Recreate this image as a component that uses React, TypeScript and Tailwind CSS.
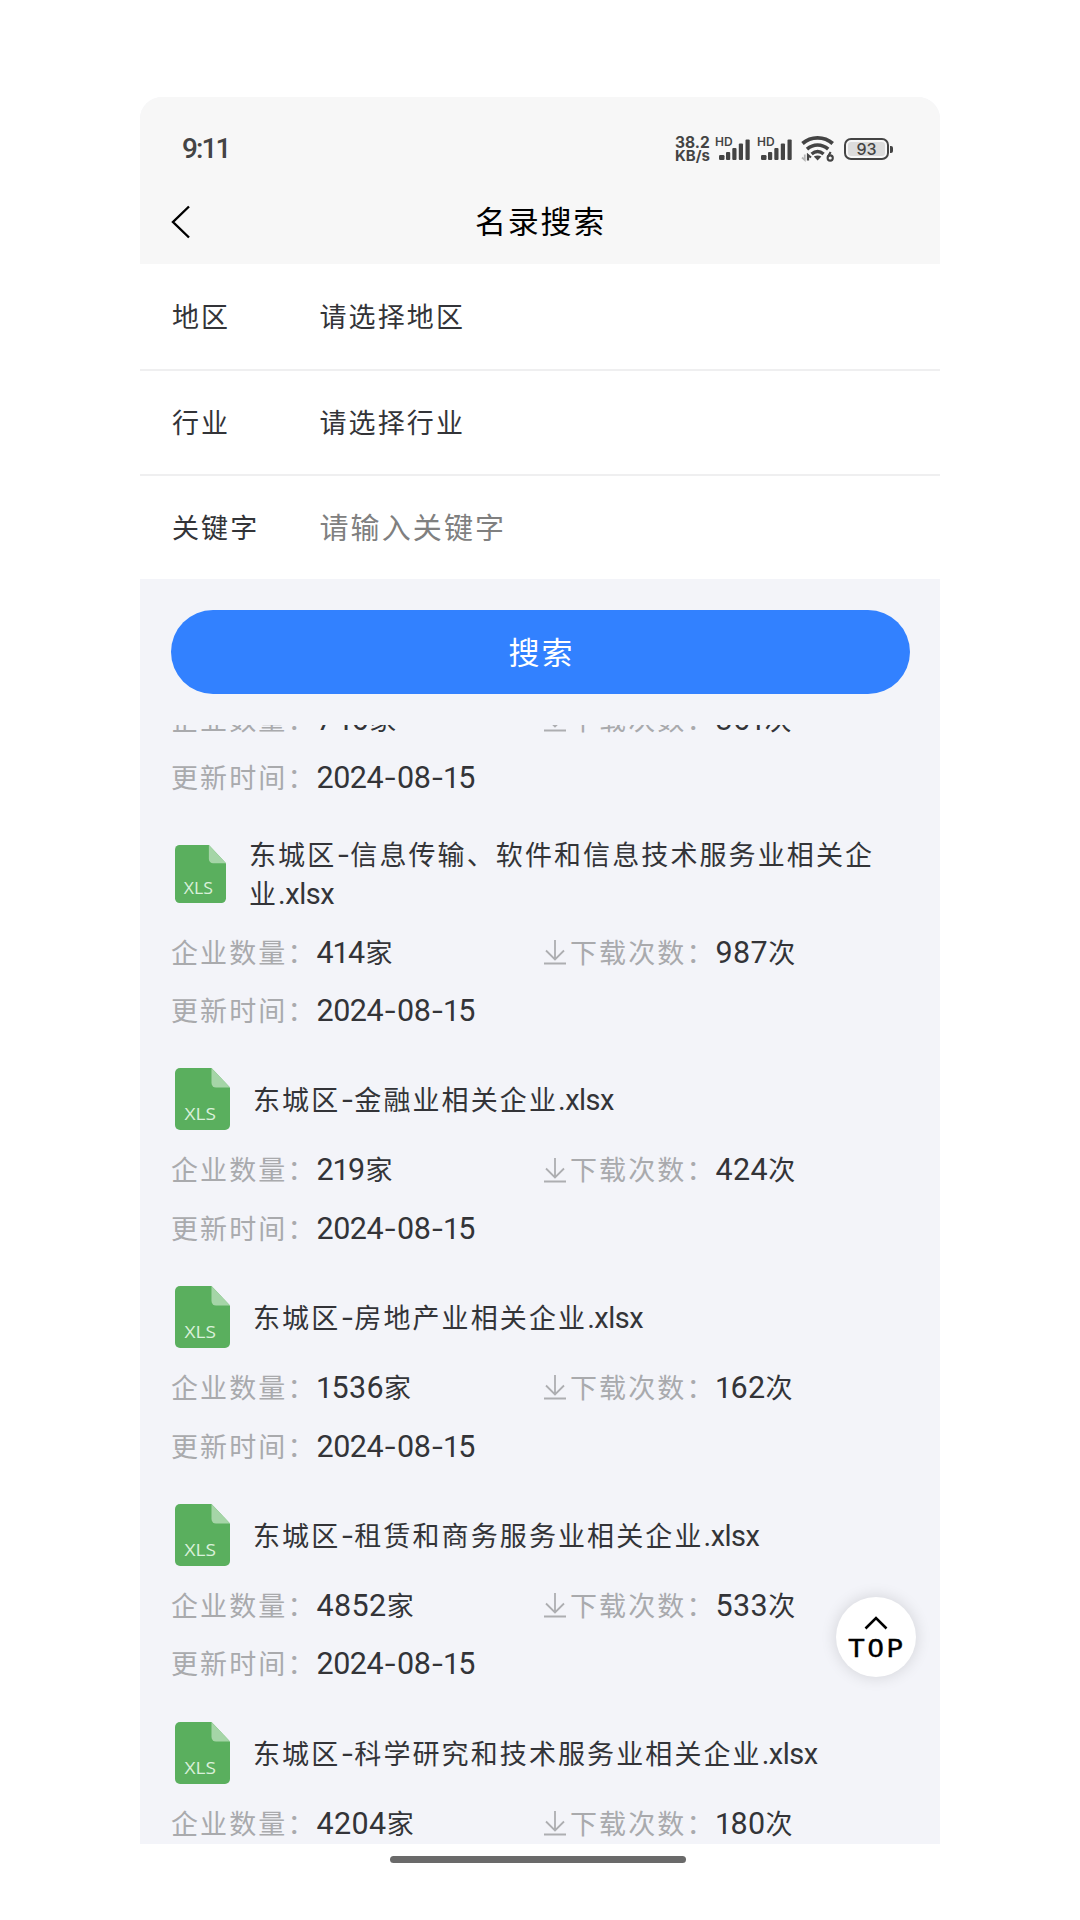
import { clsx } from "clsx";

interface CompanyFile {
    name: string;
    count: string;
    downloads: string;
    updatedAt: string;
}

const files: CompanyFile[] = [
    { name: "东城区-信息传输、软件和信息技术服务业相关企业.xlsx", count: "414", downloads: "987", updatedAt: "2024-08-15" },
    { name: "东城区-金融业相关企业.xlsx", count: "219", downloads: "424", updatedAt: "2024-08-15" },
    { name: "东城区-房地产业相关企业.xlsx", count: "1536", downloads: "162", updatedAt: "2024-08-15" },
    { name: "东城区-租赁和商务服务业相关企业.xlsx", count: "4852", downloads: "533", updatedAt: "2024-08-15" },
    { name: "东城区-科学研究和技术服务业相关企业.xlsx", count: "4204", downloads: "180", updatedAt: "2024-08-15" },
];

// Latin runs get their own face and spacing, Chinese characters keep the inherited one
function MixedText({ text, compact = false }: { text: string; compact?: boolean }) {
    return (
        <>
            {text.split(/(1|[02-9]+|-|[a-z.]+)/).map((part, i) => {
                if (!part) return null;
                if (part === "-") {
                    return <span key={i} className="inline-block w-[14px] text-center font-['Inter'] text-[29px] leading-none tracking-normal">-</span>;
                }
                if (part === "1") {
                    return <span key={i} className="-ml-[1.500px] font-['Roboto'] text-[30px] leading-none tracking-[-1.500px]">1</span>;
                }
                if (/\d/.test(part)) {
                    return <span key={i} className={clsx("font-['Roboto'] text-[30.500px] leading-none", compact ? "tracking-[-0.500px]" : "tracking-[0.400px]")}>{part}</span>;
                }
                if (/[a-z.]/.test(part)) {
                    return <span key={i} className="font-['Roboto'] text-[29px] leading-none tracking-[-0.500px]">{part}</span>;
                }
                return <span key={i}>{part}</span>;
            })}
        </>
    );
}

function Signal() {
    return (
        <div className="relative h-[26px] w-[36px]">
            <span className="absolute left-0 top-0 font-['Inter'] text-[12px] font-semibold leading-[12px]">HD</span>
            <svg className="absolute left-[4px] top-[3px]" width="32" height="21" viewBox="0 0 32 21" fill="currentColor">
                <rect x="0" y="16" width="5.500" height="5" rx="1.200" />
                <rect x="7" y="13" width="4.200" height="8" rx="1" />
                <rect x="13.300" y="9" width="4.200" height="12" rx="1" />
                <rect x="19.800" y="4.500" width="4.200" height="16.500" rx="1" />
                <rect x="26.500" y="0.500" width="4.200" height="20.500" rx="1" />
            </svg>
        </div>
    );
}

function WifiIcon() {
    return (
        <svg width="34" height="28" viewBox="0 0 34 28" fill="none" stroke="currentColor">
            <path d="M1.500 8.500C10 1 23.200 1 31.700 8.500" strokeWidth="3.800" />
            <path d="M6 14.200C12.400 8.600 20.800 8.600 27.200 14.200" strokeWidth="3.600" />
            <path d="M10.600 19C14.600 15.600 18.600 15.600 22.600 19" strokeWidth="3.400" />
            <path d="M12.800 21.600C15.200 20 18 20 20.400 21.600L16.600 25.500Z" fill="currentColor" stroke="none" />
            <path d="M3.800 19.500V25L1 22.500" stroke="#b5b5b5" strokeWidth="1.800" />
            <path d="M7 25.500V20L10 22.500" strokeWidth="2.200" />
            <circle cx="29.200" cy="23" r="2.600" strokeWidth="2.100" />
            <path d="M26.900 21.800L29.600 17" strokeWidth="2.100" />
        </svg>
    );
}

function StatusBar() {
    return (
        <div className="flex h-[104px] items-center justify-between pl-[42px] pr-[47px] text-[#444]">
            <span className="font-['Roboto'] text-[28px] font-medium tracking-[-1.900px]">9:11</span>
            <div className="flex items-center">
                <div className="mr-[5px] w-[35px] whitespace-nowrap font-['Inter'] text-[15.500px] font-bold leading-[13.500px]">
                    <div>38.2</div>
                    <div className="text-[15px]">KB/s</div>
                </div>
                <Signal />
                <div className="w-[6px]" />
                <Signal />
                <div className="ml-[8px]">
                    <WifiIcon />
                </div>
                <div className="ml-[9px] flex items-center">
                    <div className="flex h-[22px] w-[45px] rounded-[7px] border-2 border-[#444] p-[2px]">
                        <div className="flex flex-1 items-center justify-center rounded-[3px] bg-[#dcdcdc] font-['Inter'] text-[16px] font-medium leading-none">93</div>
                    </div>
                    <div className="ml-[1px] h-[7px] w-[3px] rounded-r-[2px] bg-[#444]" />
                </div>
            </div>
        </div>
    );
}

function XlsIcon({ small = false }: { small?: boolean }) {
    return (
        <svg className={clsx("shrink-0", small ? "h-[58px] w-[51px]" : "h-[62px] w-[55px]")} viewBox="0 0 55 62" preserveAspectRatio="none">
            <path d="M5 0H36.5L55 19.5V57a5 5 0 0 1-5 5H5a5 5 0 0 1-5-5V5a5 5 0 0 1 5-5Z" fill="#5aaf5e" />
            <path d="M36.5 0L55 19.5H41a4.500 4.500 0 0 1-4.500-4.500Z" fill="#a5d5a7" />
            <text x="9.500" y="52.300" fontFamily="Open Sans" fontSize="16.500" letterSpacing="0" textLength="31.500" lengthAdjust="spacingAndGlyphs" fill="#d9f0da">XLS</text>
        </svg>
    );
}

function DownloadIcon() {
    return (
        <svg className="mr-[3px] shrink-0" width="24" height="26" viewBox="0 0 24 26" fill="none" stroke="#adaeb1" strokeWidth="1.8">
            <path d="M12 1V20M3 11.500L12 20.500L21 11.500M1 24.500H23" />
        </svg>
    );
}

function FileMeta({ count, downloads, updatedAt }: Omit<CompanyFile, "name">) {
    return (
        <>
            <div className="flex h-[58.300px] items-center">
                <div className="flex w-[372px] items-center">
                    <span className="text-[#a9aaad]">企业数量：</span>
                    <span className={clsx(count.startsWith("1") && "pl-[1px]")}><MixedText text={`${count}家`} /></span>
                </div>
                <DownloadIcon />
                <span className="text-[#a9aaad]">下载次数：</span>
                <span className={clsx(downloads.startsWith("1") && "pl-[1px]")}><MixedText text={`${downloads}次`} /></span>
            </div>
            <div className="flex h-[58.300px] items-center">
                <span className="text-[#a9aaad]">更新时间：</span>
                <span><MixedText text={updatedAt} compact /></span>
            </div>
        </>
    );
}

function FileItem({ file }: { file: CompanyFile }) {
    const isLong = file.name.length > 26;

    return (
        <div className="pt-[18.700px]">
            <div className={clsx("flex items-center pl-[4px]", isLong ? "h-[97.300px]" : "h-[82.500px]")}>
                <XlsIcon small={isLong} />
                <div className={clsx("leading-[39px]", isLong ? "-mt-[2px] ml-[23px] w-[640px]" : "-mt-[1px] ml-[23px] whitespace-nowrap")}>
                    <MixedText text={file.name} />
                </div>
            </div>
            <FileMeta count={file.count} downloads={file.downloads} updatedAt={file.updatedAt} />
        </div>
    );
}

function FormRow({ label, value, className, isPlaceholder = false }: { label: string; value: string; className: string; isPlaceholder?: boolean }) {
    return (
        <div className={clsx("flex items-center border-[#efeff0] bg-white pl-[32px]", className)}>
            <span className="w-[147.500px]">{label}</span>
            <span className={clsx(isPlaceholder && "text-[29px] tracking-[2.100px] text-[#808080]")}>{value}</span>
        </div>
    );
}

export default function App() {
    return (
        <div className="h-[1920px] w-[1080px] overflow-hidden bg-white px-[140px] pt-[97px] font-['Noto_Sans_CJK_SC',sans-serif] text-[27px] tracking-[2.100px] text-[#333438]">
            <div className="relative flex h-[1747px] flex-col overflow-hidden rounded-t-[22px] bg-[#f3f4f9]">
                <header className="h-[167px] shrink-0 bg-[#f7f7f7] tracking-normal">
                    <StatusBar />
                    <div className="grid h-[35px] grid-cols-3 items-center px-[31px] text-black">
                        <svg width="20" height="34" viewBox="0 0 20 34" fill="none" stroke="currentColor" strokeWidth="2.400">
                            <path d="M18 1.500L2 17L18 32.500" />
                        </svg>
                        <h1 className="-mt-[4px] whitespace-nowrap pl-[1px] text-center text-[31px] tracking-[1.800px]">名录搜索</h1>
                    </div>
                </header>

                <div className="shrink-0">
                    <FormRow className="h-[107px] border-b-2" label="地区" value="请选择地区" />
                    <FormRow className="h-[105px] border-b-2" label="行业" value="请选择行业" />
                    <FormRow className="h-[103px] pb-[1px]" label="关键字" value="请输入关键字" isPlaceholder />
                </div>

                <div className="shrink-0 py-[31px] pl-[31px] pr-[30px]">
                    <button className="flex h-[84px] w-full items-center justify-center rounded-full bg-[#3281ff] pb-[2px] pl-[2px] text-[31px] text-white">搜索</button>
                </div>

                <div className="min-h-0 flex-1 overflow-hidden pl-[31px]">
                    <div className="-mt-[34.800px]">
                        <FileMeta count="746" downloads="361" updatedAt="2024-08-15" />
                        {files.map((file) => (
                            <FileItem key={file.name} file={file} />
                        ))}
                    </div>
                </div>

                <button className="absolute left-[696px] top-[1500px] flex h-[80px] w-[80px] flex-col items-center rounded-full bg-white pt-[19px] text-black shadow-[0_0_16px_rgba(0,0,0,0.14)]">
                    <svg width="24" height="14" viewBox="0 0 24 14" fill="none" stroke="currentColor" strokeWidth="2.600">
                        <path d="M1.500 12.500L12 2L22.500 12.500" />
                    </svg>
                    <span className="mt-[6px] scale-x-[1.120] pl-[2px] font-['DejaVu_Sans_Mono'] text-[25px] leading-[25px] tracking-[2px] [-webkit-text-stroke:0.300px_black]">TOP</span>
                </button>
            </div>
            <div className="ml-[250px] mt-[12px] h-[7px] w-[296px] rounded-full bg-[#6a6a6a]" />
        </div>
    );
}
